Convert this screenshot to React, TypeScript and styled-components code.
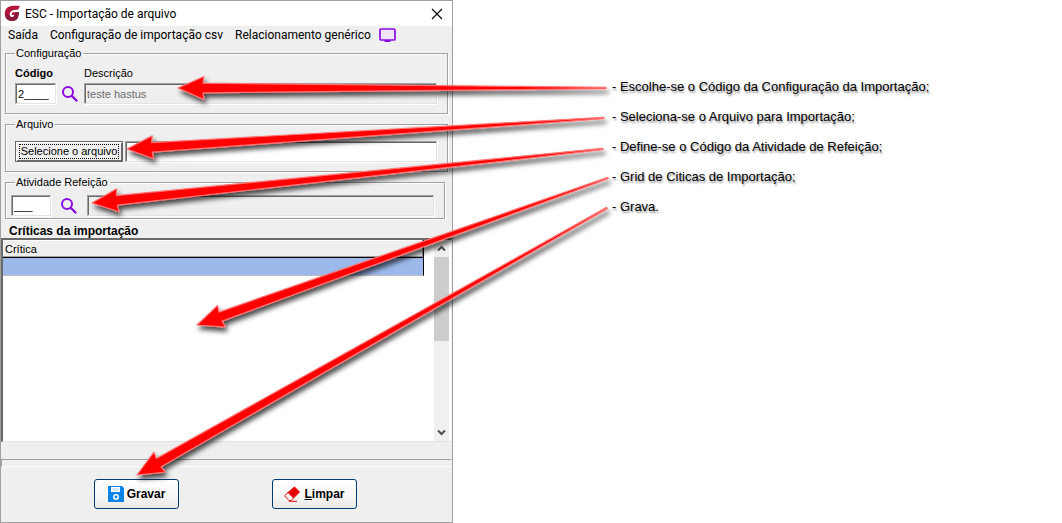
import React from 'react';
import styled, { createGlobalStyle } from 'styled-components';

const GlobalStyle = createGlobalStyle`
  *, *::before, *::after { box-sizing: border-box; }
  body { margin: 0; background: #fff; color: #000; }
  body, input, button { font-family: "Liberation Sans", Arial, sans-serif; font-size: 11px; line-height: 14px; }
`;

const Page = styled.main`
  position: relative;
  display: grid;
  grid-template-columns: minmax(0, 453fr) minmax(0, 609fr);
`;

const Dialog = styled.section`
  display: flex;
  flex-direction: column;
  background: #efefef;
  border: 1px solid #a0a0a0;
`;

const TitleBar = styled.header`
  display: flex;
  align-items: center;
  gap: 4px;
  height: 25px;
  padding: 0 9px 0 3px;
  background: #fff;
`;

const Title = styled.h1`
  flex: 1;
  margin: 0;
  font: 400 12px/16px Roboto, sans-serif;
`;

const PlainButton = styled.button`
  display: flex;
  padding: 0;
  border: 0;
  background: none;
  color: inherit;
`;

const MenuBar = styled.nav`
  display: flex;
  align-items: center;
  gap: 12px;
  height: 18px;
  margin-bottom: 2px;
  padding: 0 7px;
`;

const MenuItem = styled.button`
  padding: 0;
  border: 0;
  background: none;
  color: #000;
  white-space: nowrap;
  font: 400 12px/16px Roboto, sans-serif;
`;

const MenuIcon = styled(PlainButton)`
  margin-left: -4px;
`;

const Group = styled.fieldset<{ $bottom?: number; $end?: number }>`
  display: block;
  min-width: 0;
  margin: 0 ${(p) => p.$end ?? 4}px 3px 4px;
  padding: 0 10px ${(p) => p.$bottom ?? 9}px 9px;
  border: 1px solid #a0a0a0;
  box-shadow: 1px 1px 0 #fff, inset 1px 1px 0 #fff;
`;

const Legend = styled.legend`
  padding: 0 2px 0 1px;
`;

const Fields = styled.div<{ $pull?: boolean }>`
  display: grid;
  grid-template-columns: ${(p) => (p.$pull ? '40px 18px 1fr' : '41px 18px 1fr')};
  column-gap: ${(p) => (p.$pull ? 9 : 5)}px;
  align-items: center;
  padding-top: 6px;
  margin-left: ${(p) => (p.$pull ? -4 : 0)}px;
`;

const FieldLabel = styled.label<{ $bold?: boolean; $start?: number }>`
  grid-column: ${(p) => p.$start ?? 1};
  margin-bottom: 3px;
  font-weight: ${(p) => (p.$bold ? 700 : 400)};
`;

const TextBox = styled.input<{ $flat?: boolean }>`
  width: 100%;
  min-width: 0;
  height: 21px;
  padding: 0 2px;
  border: 1px solid;
  border-color: #a0a0a0 #e3e3e3 #e3e3e3 #a0a0a0;
  box-shadow: inset 1px 1px 0 #696969, 1px 1px 0 #fff;
  background: ${(p) => (p.$flat ? '#efefef' : '#fff')};
  color: ${(p) => (p.$flat ? '#6d6d6d' : '#000')};
  outline: 0;
`;

const FileRow = styled.div`
  display: grid;
  grid-template-columns: 108px 1fr;
  gap: 2px;
  padding-top: 10px;
`;

const FileButton = styled.button`
  height: 21px;
  padding: 2px;
  border: 1px solid #696969;
  box-shadow: inset 1px 1px 0 #fff, inset -1px -1px 0 #696969;
  background: #efefef;
  color: #000;
`;

const FocusRing = styled.span`
  display: block;
  margin: 0 1px;
  border: 1px dotted #000;
  line-height: 13px;
  white-space: nowrap;
`;

const GridTitle = styled.h2`
  margin: 3px 8px 0;
  font-size: 12px;
  line-height: 13px;
`;

const GridBox = styled.div`
  display: flex;
  height: 204px;
  border-style: solid;
  border-width: 2px 1px 1px 2px;
  border-color: #696969 #efefef #e3e3e3 #696969;
  background: #fff;
`;

const GridView = styled.div`
  flex: 1;
  padding-right: 10px;
`;

const Table = styled.table`
  width: 100%;
  border-collapse: separate;
  border-spacing: 0;
`;

const HeadCell = styled.th`
  height: 18px;
  padding: 0 2px;
  border-right: 1px solid #000;
  border-bottom: 1px solid #000;
  box-shadow: inset -1px -1px 0 #a0a0a0, inset 1px 1px 0 #fff;
  background: #efefef;
  font-weight: 400;
  text-align: left;
`;

const Cell = styled.td`
  height: 18px;
  padding: 0;
  border-right: 1px solid #000;
  border-bottom: 1px solid #c0c0c0;
  background: #9db8ea;
`;

const ScrollBar = styled.div`
  display: flex;
  flex-direction: column;
  width: 15px;
  margin-right: 2px;
  background: #f0f0f0;
`;

const ScrollButton = styled(PlainButton)`
  height: 17px;
  align-items: center;
  justify-content: center;
`;

const Track = styled.div`
  flex: 1;
`;

const Thumb = styled.div`
  height: 84px;
  background: #cdcdcd;
`;

const StatusStrip = styled.div`
  height: 8px;
  margin: 17px 1px 0 0;
  border-top: 1px solid #a0a0a0;
  border-left: 1px solid #a0a0a0;
  border-bottom: 1px solid #fff;
`;

const Actions = styled.footer`
  display: grid;
  grid-template-columns: 85px 85px;
  justify-content: center;
  gap: 93px;
  padding: 12px 2px 13px 0;
`;

const ActionButton = styled.button`
  display: flex;
  align-items: center;
  justify-content: center;
  gap: 3px;
  height: 30px;
  padding: 0;
  border: 1px solid #003c74;
  border-radius: 3px;
  background: linear-gradient(#fff, #f7f6f5 60%, #ebe8e4);
  color: #000;
  font-size: 12px;
  font-weight: 700;
`;

const Notes = styled.ul`
  display: flex;
  flex-direction: column;
  gap: 14px;
  margin: 0;
  padding: 79px 0 0 159px;
  list-style: none;
  font-size: 13px;
  line-height: 16px;
  text-shadow: 1px 2px 2px rgba(0, 0, 0, 0.45);
  white-space: nowrap;
`;

const Overlay = styled.svg`
  position: absolute;
  inset: 0;
  width: 100%;
  height: 100%;
  pointer-events: none;
`;

const SearchIcon = () => (
  <svg width="18" height="18" viewBox="0 0 18 18" fill="none" stroke="#8a0be0" strokeWidth="2">
    <circle cx="7" cy="7" r="5" />
    <path d="M10.6 10.6 16.2 16.2" strokeWidth="2.2" />
  </svg>
);

type Point = [number, number];

const arrows: { tip: Point; tail: Point }[] = [
  { tip: [178, 88], tail: [606, 88] },
  { tip: [127, 149], tail: [604, 118] },
  { tip: [92, 203], tail: [603, 149] },
  { tip: [197, 325], tail: [608, 178] },
  { tip: [137, 475], tail: [607, 208] },
];

const arrowPoints = (tip: Point, tail: Point) => {
  const dx = tail[0] - tip[0];
  const dy = tail[1] - tip[1];
  const length = Math.hypot(dx, dy);
  const outline: Point[] = [
    [0, 0], [26, -11.5], [25, -4.8], [length, -0.7],
    [length, 0.7], [25, 4.8], [26, 11.5],
  ];
  return outline
    .map(([along, across]) => [
      tip[0] + (along * dx - across * dy) / length,
      tip[1] + (along * dy + across * dx) / length,
    ].join(','))
    .join(' ');
};

const notes = [
  '- Escolhe-se o Código da Configuração da Importação;',
  '- Seleciona-se o Arquivo para Importação;',
  '- Define-se o Código da Atividade de Refeição;',
  '- Grid de Citicas de Importação;',
  '- Grava.',
];

export default function App() {
  return (
    <>
      <GlobalStyle />
      <Page>
        <Dialog aria-label="Importação de arquivo">
          <TitleBar>
            <svg width="17" height="17" viewBox="0 0 17 17" fill="none">
              <path d="M16 1C9 .2 3.500.5 1.500 5-.5 10 1.800 15 6.500 15.800c3.500.5 6.500-.5 7.500-3.600l1.200-5H8.500L7.500 10h3c-.5 1.700-1.500 2.200-3 2-1.700-.4-2-2.200-1.500-4C6.700 5.600 8.500 4.800 14 4.800z" fill="#b5173c" />
              <path d="M1.200 10c.3 3.400 2.300 5.500 5.300 5.800 3.500.5 6.500-.5 7.500-3.600l1.200-5h-3.500L10.500 10c-.5 1.700-1.500 2.200-3 2C5.500 12 5 11 4 9z" fill="#8a1b3c" />
            </svg>
            <Title>ESC - Importação de arquivo</Title>
            <PlainButton aria-label="Fechar">
              <svg width="12" height="12" viewBox="0 0 12 12" stroke="#000" strokeWidth="1.100"><path d="M1 1 11 11M11 1 1 11" /></svg>
            </PlainButton>
          </TitleBar>
          <MenuBar>
            <MenuItem>Saída</MenuItem>
            <MenuItem>Configuração de importação csv</MenuItem>
            <MenuItem>Relacionamento genérico</MenuItem>
            <MenuIcon aria-label="Tela">
              <svg width="17" height="14" viewBox="0 0 17 14"><rect x="1" y="1" width="15" height="11" rx="1" fill="#efe4f8" stroke="#8a0be0" strokeWidth="1.700" /><path d="M5.500 12h6v2h-6z" fill="#8a0be0" /></svg>
            </MenuIcon>
          </MenuBar>

          <Group>
            <Legend>Configuração</Legend>
            <Fields>
              <FieldLabel $bold htmlFor="codigo">Código</FieldLabel>
              <FieldLabel $start={3} htmlFor="descricao">Descrição</FieldLabel>
              <TextBox id="codigo" defaultValue="2____" />
              <PlainButton aria-label="Pesquisar configuração"><SearchIcon /></PlainButton>
              <TextBox $flat id="descricao" readOnly defaultValue="teste hastus" />
            </Fields>
          </Group>

          <Group>
            <Legend>Arquivo</Legend>
            <FileRow>
              <FileButton><FocusRing>Selecione o arquivo</FocusRing></FileButton>
              <TextBox aria-label="Caminho do arquivo" />
            </FileRow>
          </Group>

          <Group $bottom={2} $end={7}>
            <Legend>Atividade Refeição</Legend>
            <Fields $pull>
              <TextBox aria-label="Código da atividade" defaultValue="___" />
              <PlainButton aria-label="Pesquisar atividade"><SearchIcon /></PlainButton>
              <TextBox $flat aria-label="Descrição da atividade" readOnly />
            </Fields>
          </Group>

          <GridTitle>Críticas da importação</GridTitle>
          <GridBox>
            <GridView>
              <Table>
                <thead><tr><HeadCell>Crítica</HeadCell></tr></thead>
                <tbody><tr><Cell /></tr></tbody>
              </Table>
            </GridView>
            <ScrollBar>
              <ScrollButton aria-label="Rolar para cima">
                <svg width="9" height="7" viewBox="0 0 9 7" fill="none" stroke="#505050" strokeWidth="2"><path d="M1 5.500 4.500 2 8 5.500" /></svg>
              </ScrollButton>
              <Track><Thumb /></Track>
              <ScrollButton aria-label="Rolar para baixo">
                <svg width="9" height="7" viewBox="0 0 9 7" fill="none" stroke="#505050" strokeWidth="2"><path d="M1 1.500 4.500 5 8 1.500" /></svg>
              </ScrollButton>
            </ScrollBar>
          </GridBox>
          <StatusStrip />
          <Actions>
            <ActionButton>
              <svg width="16" height="16" viewBox="0 0 16 16"><path d="M0 0h14l2 2v14H0z" fill="#0a84e8" /><path d="M3 1h9v5H3z" fill="#fff" /><path d="M4 2h7v3H4z" fill="#d5ebfc" /><circle cx="8" cy="11" r="2.200" fill="#0a84e8" stroke="#fff" strokeWidth="1.500" /></svg>
              <span>Gravar</span>
            </ActionButton>
            <ActionButton>
              <svg width="17" height="16" viewBox="0 0 17 16"><path d="M10.500 1 15.500 6 9.500 12 4 6.500z" fill="#e60000" stroke="#e60000" /><path d="M4 6.500.7 9.800 5 14.500h2L9.500 12z" fill="#fff" stroke="#e60000" /><path d="M5 15.300h8" stroke="#e60000" /></svg>
              <span><u>L</u>impar</span>
            </ActionButton>
          </Actions>
        </Dialog>

        <Notes>
          {notes.map((note) => <li key={note}>{note}</li>)}
        </Notes>

        <Overlay viewBox="0 0 1062 523" preserveAspectRatio="none" aria-hidden="true">
          <defs>
            <filter id="arrow-shadow" filterUnits="userSpaceOnUse" x="0" y="0" width="1062" height="523">
              <feDropShadow dx="2" dy="4" stdDeviation="2.500" floodOpacity="0.700" />
            </filter>
          </defs>
          {arrows.map(({ tip, tail }) => (
            <polygon
              key={tip.join()}
              points={arrowPoints(tip, tail)}
              fill="#f00"
              stroke="#ff7474"
              strokeWidth="1.200"
              strokeLinejoin="round"
              filter="url(#arrow-shadow)"
            />
          ))}
        </Overlay>
      </Page>
    </>
  );
}
